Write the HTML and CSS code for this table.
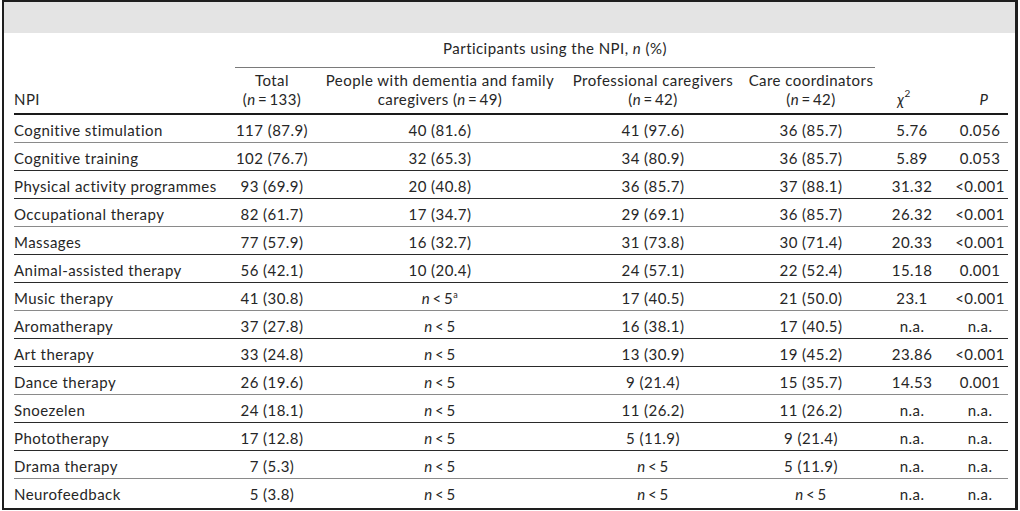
FILE: index.html
```html
<!DOCTYPE html>
<html>
<head>
<meta charset="utf-8">
<link rel="stylesheet" href="styles.css">
</head>
<body>
<div class="frame">
  <div class="band"></div>
  <div class="wrap">
    <table class="tbl">
      <colgroup>
        <col class="c-npi">
        <col class="c-tot">
        <col class="c-pwd">
        <col class="c-pro">
        <col class="c-cc">
        <col class="c-chi">
        <col class="c-p">
      </colgroup>
      <thead>
        <tr class="h1">
          <th></th>
          <th colspan="4"><div class="span-title">Participants using the NPI, <i>n</i> (%)</div></th>
          <th></th>
          <th></th>
        </tr>
        <tr class="h2">
          <th class="l">NPI</th>
          <th>Total<br>(<i>n</i>&#8201;=&#8201;133)</th>
          <th>People with dementia and family<br>caregivers (<i>n</i>&#8201;=&#8201;49)</th>
          <th>Professional caregivers<br>(<i>n</i>&#8201;=&#8201;42)</th>
          <th>Care coordinators<br>(<i>n</i>&#8201;=&#8201;42)</th>
          <th class="chi"><i>χ</i><sup>2</sup></th>
          <th class="p ph"><i>P</i></th>
        </tr>
      </thead>
      <tbody>
        <tr><td class="l">Cognitive stimulation</td><td>117 (87.9)</td><td>40 (81.6)</td><td>41 (97.6)</td><td>36 (85.7)</td><td>5.76</td><td class="p">0.056</td></tr>
        <tr><td class="l">Cognitive training</td><td>102 (76.7)</td><td>32 (65.3)</td><td>34 (80.9)</td><td>36 (85.7)</td><td>5.89</td><td class="p">0.053</td></tr>
        <tr><td class="l">Physical activity programmes</td><td>93 (69.9)</td><td>20 (40.8)</td><td>36 (85.7)</td><td>37 (88.1)</td><td>31.32</td><td class="p">&lt;0.001</td></tr>
        <tr><td class="l">Occupational therapy</td><td>82 (61.7)</td><td>17 (34.7)</td><td>29 (69.1)</td><td>36 (85.7)</td><td>26.32</td><td class="p">&lt;0.001</td></tr>
        <tr><td class="l">Massages</td><td>77 (57.9)</td><td>16 (32.7)</td><td>31 (73.8)</td><td>30 (71.4)</td><td>20.33</td><td class="p">&lt;0.001</td></tr>
        <tr><td class="l">Animal-assisted therapy</td><td>56 (42.1)</td><td>10 (20.4)</td><td>24 (57.1)</td><td>22 (52.4)</td><td>15.18</td><td class="p">0.001</td></tr>
        <tr><td class="l">Music therapy</td><td>41 (30.8)</td><td><i>n</i>&#8201;&lt;&#8201;5<sup class="a">a</sup></td><td>17 (40.5)</td><td>21 (50.0)</td><td>23.1</td><td class="p">&lt;0.001</td></tr>
        <tr><td class="l">Aromatherapy</td><td>37 (27.8)</td><td><i>n</i>&#8201;&lt;&#8201;5</td><td>16 (38.1)</td><td>17 (40.5)</td><td>n.a.</td><td class="p">n.a.</td></tr>
        <tr><td class="l">Art therapy</td><td>33 (24.8)</td><td><i>n</i>&#8201;&lt;&#8201;5</td><td>13 (30.9)</td><td>19 (45.2)</td><td>23.86</td><td class="p">&lt;0.001</td></tr>
        <tr><td class="l">Dance therapy</td><td>26 (19.6)</td><td><i>n</i>&#8201;&lt;&#8201;5</td><td>9 (21.4)</td><td>15 (35.7)</td><td>14.53</td><td class="p">0.001</td></tr>
        <tr><td class="l">Snoezelen</td><td>24 (18.1)</td><td><i>n</i>&#8201;&lt;&#8201;5</td><td>11 (26.2)</td><td>11 (26.2)</td><td>n.a.</td><td class="p">n.a.</td></tr>
        <tr><td class="l">Phototherapy</td><td>17 (12.8)</td><td><i>n</i>&#8201;&lt;&#8201;5</td><td>5 (11.9)</td><td>9 (21.4)</td><td>n.a.</td><td class="p">n.a.</td></tr>
        <tr><td class="l">Drama therapy</td><td>7 (5.3)</td><td><i>n</i>&#8201;&lt;&#8201;5</td><td><i>n</i>&#8201;&lt;&#8201;5</td><td>5 (11.9)</td><td>n.a.</td><td class="p">n.a.</td></tr>
        <tr><td class="l">Neurofeedback</td><td>5 (3.8)</td><td><i>n</i>&#8201;&lt;&#8201;5</td><td><i>n</i>&#8201;&lt;&#8201;5</td><td><i>n</i>&#8201;&lt;&#8201;5</td><td>n.a.</td><td class="p">n.a.</td></tr>
      </tbody>
    </table>
  </div>
</div>
</body>
</html>
```
FILE: styles.css
```css
html, body {
  margin: 0;
  padding: 0;
  background: #ffffff;
}
body {
  font-family: "Lato", "Liberation Sans", sans-serif;
  font-size: 15px;
  letter-spacing: 0.45px;
  color: #262626;
}
.frame {
  margin-left: 2px;
  width: 1016px;
  height: 510px;
  box-sizing: border-box;
  border: 2px solid #1e1e1e;
  border-right-width: 3px;
  overflow: hidden;
}
.band {
  height: 31px;
  background: #e4e4e4;
}
.wrap {
  padding-left: 10px;
}
.tbl {
  border-collapse: separate;
  border-spacing: 0;
  table-layout: fixed;
  width: 994px;
}
.c-npi { width: 214px; }
.c-tot { width: 88px; }
.c-pwd { width: 248px; }
.c-pro { width: 178px; }
.c-cc { width: 138px; }
.c-chi { width: 64px; }
.c-p { width: 64px; }

th, td {
  padding: 0;
  font-weight: normal;
  text-align: center;
  white-space: nowrap;
}
.l { text-align: left; }
th.p, td.p { padding-left: 8px; }
.h2 th.ph { padding-left: 16px; }
.h2 th.chi { padding-right: 16px; }

.h1 th {
  vertical-align: bottom;
}
.span-title {
  margin: 0 5px 0 7px;
  padding: 6px 0 9px;
  line-height: 19px;
  border-bottom: 1px solid #7a7a7a;
}
.h2 th {
  vertical-align: bottom;
  line-height: 19px;
  padding-top: 3px;
  padding-bottom: 4px;
  border-bottom: 2px solid #1a1a1a;
}
sup {
  font-size: 10px;
  line-height: 0;
  vertical-align: 8px;
}
sup.a {
  font-size: 9px;
  vertical-align: 6px;
}
td {
  line-height: 24px;
  padding-top: 3px;
  border-bottom: 1px solid #2a2a2a;
}
tbody tr:nth-child(3n+1) td {
  border-bottom-color: #8a8a8a;
}
tbody tr:last-child td {
  border-bottom: 0;
}
```
